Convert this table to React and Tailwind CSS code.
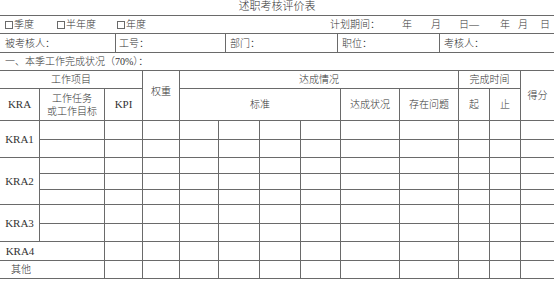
import React from 'react'

const font = { fontFamily: '"Liberation Serif", "Noto Sans CJK SC", serif' }

// table columns / rows, matched to the scan
const COLS = 'grid-cols-[40px_65px_38px_37px_39px_41px_41px_40px_59px_59px_31px_31px_33px]'
const ROWS = 'grid-rows-[18px_32px_19px_18px_16px_16px_15px_19px_18px_19px_18px]'

const line = 'border-[#6a6a6a]'

function Box() {
  return <span className={`inline-block w-[8px] h-[8px] border ${line} mr-[1px] align-[-1px]`} />
}

function Cell({ className = '', last = false, children }) {
  return (
    <div className={`flex items-center justify-center text-center border-b ${line} ${last ? '' : 'border-r'} ${className}`}>
      {children}
    </div>
  )
}

function Blanks({ count }) {
  return Array.from({ length: count }).map((_, i) => (
    <Cell key={i} last={i === count - 1} />
  ))
}

export default function App() {
  return (
    <div className="w-[554px] h-[281px] bg-white text-[#333] text-[10px] font-light overflow-hidden" style={font}>
      {/* title */}
      <div className={`h-[16px] border-b ${line} flex justify-center text-[11px] leading-[12px]`}>
        述职考核评价表
      </div>

      {/* period row */}
      <div className={`h-[18px] border-b ${line} flex items-center pl-[5px] whitespace-nowrap`}>
        <span className="w-[52px]"><Box />季度</span>
        <span className="w-[60px]"><Box />半年度</span>
        <span className="w-[213px]"><Box />年度</span>
        <span className="w-[72px]">计划期间：</span>
        <span className="w-[29px]">年</span>
        <span className="w-[28px]">月</span>
        <span className="w-[41px]">日—</span>
        <span className="w-[18px]">年</span>
        <span className="w-[22px]">月</span>
        <span>日</span>
      </div>

      {/* people row */}
      <div className={`h-[19px] border-b ${line} flex`}>
        <div className={`w-[116px] border-r ${line} pl-[5px] flex items-center`}>被考核人：</div>
        <div className={`w-[110px] border-r ${line} pl-[3px] flex items-center`}>工号：</div>
        <div className={`w-[112px] border-r ${line} pl-[4px] flex items-center`}>部门：</div>
        <div className={`w-[102px] border-r ${line} pl-[4px] flex items-center`}>职位：</div>
        <div className="flex-1 pl-[4px] flex items-center">考核人：</div>
      </div>

      {/* section heading */}
      <div className={`h-[18px] border-b ${line} pl-[5px] flex items-center`}>
        一、本季工作完成状况（70%）：
      </div>

      {/* main table */}
      <div className={`grid ${COLS} ${ROWS}`}>
        <Cell className="col-span-3">工作项目</Cell>
        <Cell className="row-span-2 pb-[8px]">权重</Cell>
        <Cell className="col-span-6">达成情况</Cell>
        <Cell className="col-span-2">完成时间</Cell>
        <Cell className="row-span-2" last>得分</Cell>

        <Cell className="text-[11px]">KRA</Cell>
        <Cell className="leading-[13px]">工作任务<br />或工作目标</Cell>
        <Cell className="text-[11px]">KPI</Cell>
        <Cell className="col-span-4">标准</Cell>
        <Cell>达成状况</Cell>
        <Cell>存在问题</Cell>
        <Cell>起</Cell>
        <Cell>止</Cell>

        <Cell className="row-span-2 text-[11px]">KRA1</Cell>
        <Blanks count={12} />
        <Blanks count={12} />

        <Cell className="row-span-3 text-[11px]">KRA2</Cell>
        <Blanks count={12} />
        <Blanks count={12} />
        <Blanks count={12} />

        <Cell className="row-span-2 text-[11px]">KRA3</Cell>
        <Blanks count={12} />
        <Blanks count={12} />

        <Cell className="col-span-2 !justify-start">
          <span className="w-[40px] text-center text-[11px]">KRA4</span>
        </Cell>
        <Blanks count={11} />

        <Cell className="col-span-2 !justify-start">
          <span className="w-[42px] text-center">其他</span>
        </Cell>
        <Blanks count={11} />
      </div>
    </div>
  )
}
